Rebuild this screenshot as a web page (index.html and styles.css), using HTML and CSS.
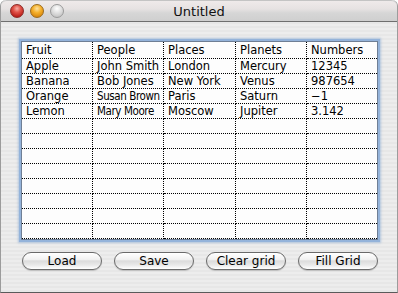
FILE: index.html
```html
<!DOCTYPE html>
<html>
<head>
<meta charset="utf-8">
<title>Untitled</title>
<link rel="stylesheet" href="styles.css">
</head>
<body>
<div class="window">
  <div class="titlebar">
    <div class="lights">
      <span class="light red"></span>
      <span class="light orange"></span>
      <span class="light gray"></span>
    </div>
    <div class="title">Untitled</div>
    <div></div>
  </div>
  <div class="content">
    <div class="grid">
      <div class="cell">Fruit</div><div class="cell">People</div><div class="cell">Places</div><div class="cell">Planets</div><div class="cell">Numbers</div>
      <div class="cell">Apple</div><div class="cell">John Smith</div><div class="cell">London</div><div class="cell">Mercury</div><div class="cell">12345</div>
      <div class="cell">Banana</div><div class="cell">Bob Jones</div><div class="cell">New York</div><div class="cell">Venus</div><div class="cell">987654</div>
      <div class="cell">Orange</div><div class="cell narrow">Susan Brown</div><div class="cell">Paris</div><div class="cell">Saturn</div><div class="cell">&minus;1</div>
      <div class="cell">Lemon</div><div class="cell narrow">Mary Moore</div><div class="cell">Moscow</div><div class="cell">Jupiter</div><div class="cell">3.142</div>
      <div class="cell"></div><div class="cell"></div><div class="cell"></div><div class="cell"></div><div class="cell"></div>
      <div class="cell"></div><div class="cell"></div><div class="cell"></div><div class="cell"></div><div class="cell"></div>
      <div class="cell"></div><div class="cell"></div><div class="cell"></div><div class="cell"></div><div class="cell"></div>
      <div class="cell"></div><div class="cell"></div><div class="cell"></div><div class="cell"></div><div class="cell"></div>
      <div class="cell"></div><div class="cell"></div><div class="cell"></div><div class="cell"></div><div class="cell"></div>
      <div class="cell"></div><div class="cell"></div><div class="cell"></div><div class="cell"></div><div class="cell"></div>
      <div class="cell"></div><div class="cell"></div><div class="cell"></div><div class="cell"></div><div class="cell"></div>
      <div class="cell"></div><div class="cell"></div><div class="cell"></div><div class="cell"></div><div class="cell"></div>
    </div>
    <div class="buttons">
      <button class="btn">Load</button>
      <button class="btn">Save</button>
      <button class="btn">Clear grid</button>
      <button class="btn">Fill Grid</button>
    </div>
  </div>
</div>
</body>
</html>
```
FILE: styles.css
```css
html, body {
  margin: 0;
  padding: 0;
  background: #ffffff;
}
.window {
  width: 398px;
  height: 293px;
  box-sizing: border-box;
  display: flex;
  flex-direction: column;
  border-radius: 6px 6px 0 0;
  overflow: hidden;
  border-left: 1px solid #9c9c9c;
  border-right: 1px solid #9c9c9c;
  border-bottom: 1px solid #5a5a5a;
  background: repeating-linear-gradient(to bottom, #ededed 0px, #ededed 2px, #e7e7e7 2px, #e7e7e7 4px);
  font-family: "DejaVu Sans", sans-serif;
}
.titlebar {
  height: 22px;
  box-sizing: border-box;
  border-bottom: 1px solid #6f6f6f;
  border-top: 1px solid #c4c4c4;
  border-radius: 6px 6px 0 0;
  background: linear-gradient(to bottom, #efeaea 0%, #e6e2e2 40%, #d6d6d6 60%, #cfcfcf 100%);
  display: grid;
  grid-template-columns: 1fr auto 1fr;
  align-items: center;
}
.lights {
  display: flex;
  gap: 6px;
  padding-left: 9px;
  align-items: center;
}
.light {
  width: 14px;
  height: 14px;
  border-radius: 50%;
  box-sizing: border-box;
  display: block;
}
.red {
  background: radial-gradient(circle at 50% 30%, #f6b0a8 0%, #e2554b 35%, #b81c17 80%, #9c1410 100%);
  border: 1px solid #8a2a26;
}
.orange {
  background: radial-gradient(circle at 50% 30%, #fde2a2 0%, #f5b12c 40%, #d5820a 85%, #b56e08 100%);
  border: 1px solid #9a6a1c;
}
.gray {
  background: radial-gradient(circle at 50% 30%, #ffffff 0%, #dedede 45%, #b8b8b8 100%);
  border: 1px solid #9a9a9a;
}
.title {
  font-size: 13px;
  color: #111;
  text-align: center;
}
.content {
  padding: 19px 20px 0 20px;
  display: flex;
  flex-direction: column;
}
.grid {
  width: 357px;
  box-sizing: border-box;
  border: 1px solid #6f7f95;
  background: #fdfdfd;
  box-shadow: 0 0 0 2px #94b3da, 0 0 2px 3px rgba(130, 165, 210, 0.55);
  display: grid;
  grid-template-columns: 71px 71px 72px 71px 70px;
  grid-template-rows: 17px;
  grid-auto-rows: 15px;
}
.cell {
  box-sizing: border-box;
  border-bottom: 1px dotted #000;
  border-right: 1px dotted #000;
  padding-left: 4px;
  font-size: 11.5px;
  line-height: 14px;
  color: #000;
  white-space: nowrap;
  overflow: hidden;
}
.cell:nth-child(-n+5) {
  line-height: 16px;
}
.cell:nth-child(5n) {
  border-right: none;
}
.narrow {
  font-family: "DejaVu Sans Condensed", "DejaVu Sans", sans-serif;
  font-stretch: condensed;
  font-size: 11.5px;
  letter-spacing: -0.4px;
}
.buttons {
  margin-top: 12px;
  margin-left: 1px;
  width: 356px;
  display: flex;
  justify-content: space-between;
}
.btn {
  width: 80px;
  height: 18px;
  box-sizing: border-box;
  border: 1px solid #6a6a6a;
  border-radius: 9px;
  padding: 0;
  font-family: "DejaVu Sans", sans-serif;
  font-size: 12px;
  line-height: 16px;
  color: #000;
  background: linear-gradient(to bottom, #ffffff 0%, #f2f2f2 40%, #dcdcdc 50%, #e9e9e9 75%, #ffffff 100%);
  box-shadow: 0 1px 1px rgba(0, 0, 0, 0.18);
}
```
